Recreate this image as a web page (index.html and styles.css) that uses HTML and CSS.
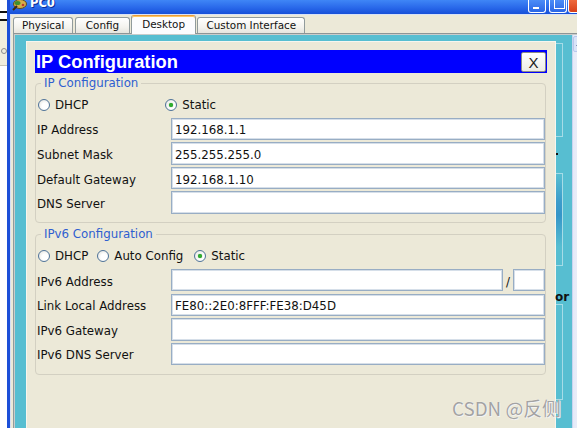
FILE: index.html
```html
<!DOCTYPE html>
<html>
<head>
<meta charset="utf-8">
<title>PC0</title>
<link rel="stylesheet" href="styles.css">
</head>
<body>
<div class="screen">
  <div class="behind">
    <div class="behind-top"></div>
    <div class="behind-box"></div>
    <div class="behind-panel"><span class="behind-knob"></span></div>
  </div>
  <div class="window">
    <div class="titlebar">
      <svg class="app-icon" width="17" height="11" viewBox="0 0 17 11">
        <ellipse cx="9" cy="4" rx="6.5" ry="4.5" fill="#D6AE48" stroke="#5B4A1E" stroke-width="1"/>
        <ellipse cx="6.5" cy="3" rx="3" ry="2" fill="#3F8F2E"/>
        <path d="M2 10 L6 6" stroke="#3A2A10" stroke-width="2"/>
        <circle cx="12" cy="5" r="1.3" fill="#C0392B"/>
      </svg>
      <span class="title">PC0</span>
      <div class="caption-btns">
        <span class="cbtn cbtn-min"></span>
        <span class="cbtn cbtn-max"></span>
        <span class="cbtn cbtn-close"></span>
      </div>
    </div>
    <div class="window-body">
      <div class="tabs">
        <div class="tab">Physical</div>
        <div class="tab tab-config">Config</div>
        <div class="tab tab-active">Desktop</div>
        <div class="tab">Custom Interface</div>
      </div>
      <div class="panel">
        <div class="desktop">
          <div class="dialog">
            <div class="dlg-title">
              <span class="dlg-title-text">IP Configuration</span>
              <span class="dlg-close">X</span>
            </div>
            <fieldset class="group group-v4">
              <legend>IP Configuration</legend>
              <div class="radios">
                <span class="opt"><span class="radio"></span>DHCP</span>
                <span class="opt opt-static4"><span class="radio radio-checked"></span>Static</span>
              </div>
              <div class="rows">
                <div class="lbl">IP Address</div><div class="field">192.168.1.1</div>
                <div class="lbl">Subnet Mask</div><div class="field">255.255.255.0</div>
                <div class="lbl">Default Gateway</div><div class="field">192.168.1.10</div>
                <div class="lbl">DNS Server</div><div class="field"></div>
              </div>
            </fieldset>
            <fieldset class="group group-v6">
              <legend>IPv6 Configuration</legend>
              <div class="radios">
                <span class="opt"><span class="radio"></span>DHCP</span>
                <span class="opt opt-auto"><span class="radio"></span>Auto Config</span>
                <span class="opt opt-static6"><span class="radio radio-checked"></span>Static</span>
              </div>
              <div class="rows">
                <div class="lbl">IPv6 Address</div>
                <div class="split">
                  <div class="field field-main"></div>
                  <span class="slash">/</span>
                  <div class="field field-prefix"></div>
                </div>
                <div class="lbl">Link Local Address</div><div class="field">FE80::2E0:8FFF:FE38:D45D</div>
                <div class="lbl">IPv6 Gateway</div><div class="field"></div>
                <div class="lbl">IPv6 DNS Server</div><div class="field"></div>
              </div>
            </fieldset>
          </div>
          <div class="strip">
            <div class="ghost ghost-1"></div>
            <div class="ghost-dot"></div>
            <div class="ghost ghost-2"></div>
            <div class="ghost-text">or</div>
            <div class="ghost ghost-3"></div>
          </div>
          <div class="scrollbar"><span class="sb-up"></span></div>
        </div>
      </div>
    </div>
  </div>
  <div class="watermark">CSDN @反侧</div>
</div>
</body>
</html>
```

FILE: styles.css
```css
* { box-sizing: border-box; }
html, body { margin: 0; padding: 0; }
body {
  width: 577px;
  height: 428px;
  overflow: hidden;
  background: #fff;
  font-family: "DejaVu Sans", Verdana, sans-serif;
  color: #111;
}
.screen {
  position: relative;
  display: flex;
  width: 577px;
  height: 428px;
  overflow: hidden;
}

/* window behind, left edge */
.behind {
  flex: none;
  width: 7px;
  display: flex;
  flex-direction: column;
  background: #fff;
}
.behind-top { height: 11px; }
.behind-box {
  height: 10px;
  border-top: 2px solid #111;
  border-bottom: 2px solid #111;
  background: #fff;
}
.behind-panel {
  height: 45px;
  background: #F1EEDD;
  border-bottom: 1px solid #C9C6B6;
  display: flex;
  align-items: flex-end;
  padding-bottom: 11px;
}
.behind-knob {
  width: 6px;
  height: 6px;
  border: 1px solid #8E8E8E;
  border-radius: 50%;
  margin-left: 1px;
}

/* main window */
.window {
  flex: none;
  width: 582px;
  display: flex;
  flex-direction: column;
  border-left: 3px solid #1C4FD8;
}
.titlebar {
  height: 14px;
  flex: none;
  display: flex;
  align-items: flex-end;
  background: linear-gradient(#3F86F6, #2968EA 55%, #1650D8);
  overflow: hidden;
}
.app-icon {
  flex: none;
  margin: 0 2px 3px 1px;
  align-self: flex-start;
}
.title {
  font-family: "DejaVu Sans", sans-serif;
  font-weight: bold;
  font-size: 11.5px;
  line-height: 13px;
  color: #fff;
  margin-bottom: 4px;
  text-shadow: 1px 1px 0 #0A2F9A;
}
.caption-btns {
  margin-left: auto;
  margin-right: 2px;
  display: flex;
  align-self: stretch;
}
.cbtn {
  width: 18px;
  height: 13px;
  border: 1px solid #fff;
  border-top: none;
  border-radius: 0 0 3px 3px;
  background: linear-gradient(#4C8DF7, #2A66E6);
  position: relative;
}
.cbtn-min { margin-right: 3px; }
.cbtn-min::after {
  content: "";
  position: absolute;
  left: 4px;
  bottom: 3px;
  width: 6px;
  height: 2px;
  background: #fff;
}
.cbtn-max { margin-right: 1px; }
.cbtn-max::after {
  content: "";
  position: absolute;
  left: 4px;
  top: 0;
  width: 9px;
  height: 8px;
  border: 1px solid #fff;
  border-top: none;
}
.cbtn-close {
  width: 19px;
  background: linear-gradient(#EE6A3E, #D8401A);
}

.window-body {
  flex: 1;
  min-height: 0;
  background: #ECE9D8;
  border-top: 1px solid #D8E2F6;
  border-left: 1px solid #D5DEF2;
  padding-left: 2px;
  display: flex;
  flex-direction: column;
}

/* tabs */
.tabs {
  flex: none;
  display: flex;
  align-items: flex-end;
  height: 18px;
  position: relative;
  z-index: 1;
}
.tab {
  height: 16px;
  margin-right: 2px;
  padding: 0 8px;
  border: 1px solid #919B9C;
  border-bottom: none;
  border-radius: 3px 3px 0 0;
  background: linear-gradient(#FFFFFF, #F4F3EE 60%, #E6E5DE);
  font-size: 10.4px;
  line-height: 15px;
  color: #111;
  white-space: nowrap;
}
.tab-config { padding: 0 9.5px; }
.tab-active {
  height: 19px;
  margin: 0 1px -1px -1px;
  padding: 0 10.5px;
  background: #FCFCFE;
  border-top: 1px solid #E89A3C;
  box-shadow: inset 0 1px 0 #FFC860;
  line-height: 16px;
}

/* tab panel */
.panel {
  flex: 1;
  min-height: 0;
  display: flex;
  border-top: 1px solid #8E9596;
  border-left: 1px solid #919B9C;
  padding: 1px 0 0 1px;
  background: #C9CCCB;
}
.desktop {
  flex: 1;
  display: flex;
  align-items: flex-start;
  background: #57BED1;
  padding-left: 11px;
}

/* dialog */
.dialog {
  flex: none;
  width: 530px;
  height: 400px;
  margin-top: 6px;
  background: #ECE9D8;
  border: 1px solid #F7F6EF;
  padding: 8px 8px 0 8px;
}
.dlg-title {
  height: 23px;
  background: #0000FF;
  display: flex;
  align-items: center;
  justify-content: space-between;
  padding: 0 1px 0 1px;
}
.dlg-title-text {
  font-family: "Liberation Sans", Arial, sans-serif;
  font-weight: bold;
  font-size: 18.3px;
  line-height: 22px;
  padding-top: 1px;
  color: #fff;
}
.dlg-close {
  width: 25px;
  height: 20px;
  border: 1px solid #8C8C88;
  border-radius: 2px;
  background: linear-gradient(#FFFFFF, #EEEDE6);
  font-family: "Liberation Sans", Arial, sans-serif;
  font-size: 15px;
  line-height: 19px;
  text-align: center;
  color: #222;
}

/* group boxes */
.group {
  margin: 3px 1px 0 0;
  padding: 6px 0 8.5px 1px;
  border: 1px solid #D3D0C2;
  border-radius: 4px;
  min-width: 0;
  font-size: 11.8px;
}
.group-v6 { margin-top: 4px; padding-bottom: 9px; }
.group legend {
  margin-left: 4px;
  padding: 0 3px;
  font-size: 11.8px;
  line-height: 14px;
  color: #2F5FD0;
}
.radios {
  height: 18px;
  display: flex;
  align-items: center;
  margin-bottom: 3.7px;
}
.opt {
  display: flex;
  align-items: center;
  gap: 5px;
  line-height: 14px;
  color: #111;
  white-space: nowrap;
}
.opt-static4 { margin-left: 76px; }
.opt-auto { margin-left: 8px; }
.opt-static6 { margin-left: 10px; }
.radio {
  flex: none;
  width: 12px;
  height: 12px;
  margin-left: 1px;
  border: 1px solid #4F7399;
  border-radius: 50%;
  background: radial-gradient(circle at 60% 60%, #FFFFFF 0, #FFFFFF 35%, #DEDED6 100%);
  display: flex;
  align-items: center;
  justify-content: center;
}
.radio-checked::after {
  content: "";
  width: 4px;
  height: 4px;
  border-radius: 50%;
  background: #2FAE2F;
  box-shadow: 0 0 1px #1C7A1C;
}
.rows {
  display: grid;
  grid-template-columns: 134px 374px;
  grid-auto-rows: 22.4px;
  row-gap: 2.2px;
  align-items: center;
}
.lbl {
  padding-top: 3px;
  line-height: 14px;
  color: #111;
  white-space: nowrap;
}
.field {
  height: 22.4px;
  background: #fff;
  border: 1px solid #98ADC4;
  box-shadow: inset 0 0 0 1px #D6DFE9;
  padding: 3px 0 0 3px;
  display: flex;
  align-items: center;
  line-height: 14px;
  color: #111;
  white-space: nowrap;
}
.split {
  display: flex;
  align-items: center;
  height: 22.4px;
}
.field-main { width: 332px; flex: none; }
.slash {
  width: 10px;
  flex: none;
  text-align: center;
  padding-top: 3px;
  line-height: 14px;
}
.field-prefix { width: 32px; flex: none; }

/* desktop icons partly hidden behind the dialog */
.strip {
  flex: none;
  width: 16px;
  display: flex;
  flex-direction: column;
  align-items: flex-start;
}
.ghost {
  width: 7px;
  border: 1px solid #A6DCE7;
  border-left: none;
}
.ghost-1 { margin-top: 8px; height: 94px; }
.ghost-dot {
  margin-top: 16px;
  width: 2px;
  height: 2px;
  background: #111;
}
.ghost-2 {
  margin-top: 18px;
  height: 93px;
  background: linear-gradient(#57BED1, #3C9CCB 30%, #3595C8 45%, #57BED1 80%);
}
.ghost-text {
  margin: 24px 0 0 -1px;
  font-family: "DejaVu Sans", sans-serif;
  font-weight: bold;
  font-size: 12px;
  line-height: 14px;
  color: #111;
  position: relative;
}
.ghost-3 { height: 96px; }

.scrollbar {
  flex: none;
  width: 17px;
  align-self: stretch;
  background: linear-gradient(90deg, #E4EAF8, #F4F6FC);
  border-left: 1px solid #C8D4F0;
}
.sb-up {
  display: block;
  width: 16px;
  height: 16px;
  margin-top: 1px;
  border: 1px solid #B8C8EC;
  border-radius: 2px;
  background: #D9E3F8;
  position: relative;
}
.sb-up::after {
  content: "";
  position: absolute;
  left: 2px;
  top: 5px;
  border-left: 3px solid transparent;
  border-right: 3px solid transparent;
  border-bottom: 4px solid #4D6185;
}

/* watermark overlay */
.watermark {
  position: absolute;
  left: 452px;
  top: 397px;
  font-family: "Noto Sans CJK SC", "Noto Sans", sans-serif;
  font-size: 18.8px;
  line-height: 22px;
  color: #A3A3A3;
  text-shadow: 0 0 1px #FFFFFF, 1px 1px 0 #F2F2F2;
  white-space: nowrap;
}
```
